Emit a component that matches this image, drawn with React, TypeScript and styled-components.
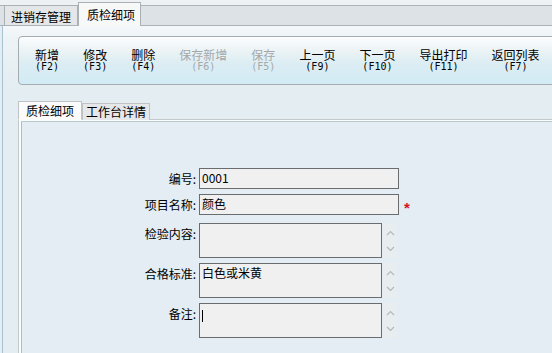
import React from "react";
import styled, { createGlobalStyle } from "styled-components";

const Global = createGlobalStyle`
  html, body { margin: 0; padding: 0; }
  body {
    width: 552px; height: 353px; overflow: hidden;
    background: #e3edf3;
    font-family: "Noto Sans CJK SC", "Liberation Sans", sans-serif;
    font-size: 12px; color: #000;
  }
`;

const Page = styled.div`
  width: 552px; height: 353px; overflow: hidden;
  display: flex; flex-direction: column;
  background: #e3edf3;
`;

const TopBar = styled.div`
  height: 26px; flex: none;
  display: flex; align-items: flex-end;
  padding-left: 4px;
  background: linear-gradient(to bottom, #edf1f4 0, #edf1f4 5px, #a9b3b8 5px, #a9b3b8 6px, #dde2e6 6px);
  border-bottom: 1px solid #a9b3b8;
  box-sizing: border-box;
`;

const TopTab = styled.div<{ $active?: boolean }>`
  height: ${p => (p.$active ? 24 : 20)}px;
  padding: ${p => (p.$active ? "0 5px 0 8px" : "2px 6px 0")};
  box-sizing: border-box;
  display: flex; align-items: center;
  background: ${p => (p.$active ? "#f7f8f8" : "#e4e6e7")};
  border: 1px solid #aab0b4;
  border-bottom: none;
  margin-bottom: ${p => (p.$active ? -1 : 0)}px;
  line-height: 14px;
  font-size: 12px;
  position: relative;
  z-index: ${p => (p.$active ? 1 : 0)};
`;

const Body = styled.div`
  flex: 1;
  display: flex; flex-direction: column;
  margin-left: 2px;
  border-left: 1px solid #a7c3d2;
  padding: 10px 0 0 15px;
  background: linear-gradient(to bottom, #f5f8fa 0, #eef3f6 11px, #e4edf2 60px);
  overflow: hidden;
`;

const Toolbar = styled.div`
  height: 49px; flex: none;
  margin-right: -12px;
  border: 1px solid #a3acb1;
  border-radius: 4px 0 0 4px;
  box-sizing: border-box;
  background: linear-gradient(to bottom, #fbfdfe 0%, #eef4f6 25%, #dcedf3 55%, #d2ebf5 100%);
  display: flex; align-items: flex-start;
  padding: 11px 0 0 16px;
  gap: 24px;
`;

const ToolButton = styled.div<{ $disabled?: boolean }>`
  display: flex; flex-direction: column; align-items: center;
  color: ${p => (p.$disabled ? "#a4a8aa" : "#000")};
  white-space: nowrap;
`;

const ToolLabel = styled.span`
  font-size: 12px; line-height: 13px;
`;

const ToolKey = styled.span`
  font-family: "DejaVu Sans Mono", "Liberation Mono", monospace;
  font-size: 10px; line-height: 11px;
`;

const InnerTabs = styled.div`
  margin-top: 16px;
  display: flex; align-items: flex-end;
  height: 19px; flex: none;
  position: relative; z-index: 1;
  margin-bottom: -1px;
`;

const InnerTab = styled.div<{ $active?: boolean }>`
  height: ${p => (p.$active ? 19 : 17)}px;
  box-sizing: border-box;
  padding: 0 ${p => (p.$active ? 7 : 3)}px;
  display: flex; align-items: center;
  background: ${p => (p.$active ? "#fbfbfb" : "#e6e7e8")};
  border: 1px solid #bfc3c6;
  border-bottom: ${p => (p.$active ? "1px solid #fbfbfb" : "none")};
  font-size: 12px; line-height: 14px;
`;

const Panel = styled.div`
  flex: 1;
  margin-right: -10px;
  border-top: 1px solid #c3c8cb;
  border-left: 1px solid #c3c8cb;
  padding: 1px 0 0 2px;
  background: #fbfcfc;
  display: flex;
`;

const PanelInner = styled.div`
  flex: 1;
  border-top: 1px solid #b8c8ce;
  border-left: 1px solid #aac0c8;
  background: #e3edf3;
  padding-top: 46px;
`;

const Form = styled.div`
  display: grid;
  grid-template-columns: 174px auto 1fr;
  column-gap: 3px;
  row-gap: 5px;
  align-items: start;
`;

const Label = styled.div`
  text-align: right;
  height: 21px; line-height: 21px;
  font-size: 12px;
  white-space: nowrap;
`;

const TextInput = styled.div`
  width: 200px; height: 21px;
  box-sizing: border-box;
  border: 1px solid #6a6d6f;
  background: #f0f0f0;
  padding: 0 2px;
  line-height: 18px;
  font-size: 12px;
`;

const AreaWrap = styled.div`
  display: flex;
  width: 200px;
`;

const TextArea = styled.div`
  width: 183px; height: 35px;
  box-sizing: border-box;
  border: 1px solid #6a6d6f;
  background: #f0f0f0;
  padding: 1px 2px;
  line-height: 16px;
  font-size: 12px;
`;

const ScrollTrack = styled.div`
  width: 15px; height: 35px;
  margin-left: 1px;
  background: #e8edef;
  display: flex; flex-direction: column; align-items: center; justify-content: space-between;
  padding: 7px 0 6px;
  box-sizing: border-box;
`;

const Required = styled.span`
  color: #d8141c;
  font-family: "Liberation Sans", sans-serif;
  font-weight: bold;
  font-size: 15px;
  line-height: 21px;
  padding-left: 2px;
  padding-top: 3px;
`;

const Caret = styled.span`
  display: inline-block;
  width: 1px; height: 12px;
  background: #000;
  vertical-align: middle;
  margin-top: 2px;
`;

const Chevron = ({ up }: { up?: boolean }) => (
  <svg width="9" height="6" viewBox="0 0 9 6">
    <polyline
      points={up ? "1,5 4.5,1.5 8,5" : "1,1 4.5,4.5 8,1"}
      fill="none"
      stroke="#b6b9bb"
      strokeWidth="1.2"
    />
  </svg>
);

const Scroll = () => (
  <ScrollTrack>
    <Chevron up />
    <Chevron />
  </ScrollTrack>
);

const tools = [
  { label: "新增", key: "(F2)" },
  { label: "修改", key: "(F3)" },
  { label: "删除", key: "(F4)" },
  { label: "保存新增", key: "(F6)", disabled: true },
  { label: "保存", key: "(F5)", disabled: true },
  { label: "上一页", key: "(F9)" },
  { label: "下一页", key: "(F10)" },
  { label: "导出打印", key: "(F11)" },
  { label: "返回列表", key: "(F7)" },
];

export default function App() {
  return (
    <Page>
      <Global />
      <TopBar>
        <TopTab>进销存管理</TopTab>
        <TopTab $active>质检细项</TopTab>
      </TopBar>
      <Body>
        <Toolbar>
          {tools.map(t => (
            <ToolButton key={t.label} $disabled={t.disabled}>
              <ToolLabel>{t.label}</ToolLabel>
              <ToolKey>{t.key}</ToolKey>
            </ToolButton>
          ))}
        </Toolbar>
        <InnerTabs>
          <InnerTab $active>质检细项</InnerTab>
          <InnerTab>工作台详情</InnerTab>
        </InnerTabs>
        <Panel>
          <PanelInner>
            <Form>
              <Label>编号:</Label>
              <TextInput>0001</TextInput>
              <span />
              <Label>项目名称:</Label>
              <TextInput>颜色</TextInput>
              <Required>*</Required>
              <Label>检验内容:</Label>
              <AreaWrap>
                <TextArea />
                <Scroll />
              </AreaWrap>
              <span />
              <Label>合格标准:</Label>
              <AreaWrap>
                <TextArea>白色或米黄</TextArea>
                <Scroll />
              </AreaWrap>
              <span />
              <Label>备注:</Label>
              <AreaWrap>
                <TextArea>
                  <Caret />
                </TextArea>
                <Scroll />
              </AreaWrap>
              <span />
            </Form>
          </PanelInner>
        </Panel>
      </Body>
    </Page>
  );
}
